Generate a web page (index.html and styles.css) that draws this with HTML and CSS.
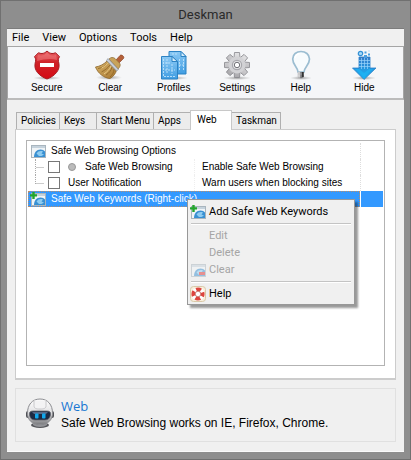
FILE: index.html
```html
<!DOCTYPE html>
<html lang="en">
<head>
<meta charset="utf-8">
<meta name="viewport" content="width=device-width, initial-scale=1">
<title>Deskman</title>
<link rel="stylesheet" href="styles.css">
</head>
<body>
<svg class="defs" aria-hidden="true">
  <defs>
    <linearGradient id="red" x1="0" y1="0" x2="0" y2="1"><stop offset="0" stop-color="#ea6266"/><stop offset=".4" stop-color="#cf2229"/><stop offset="1" stop-color="#d50812"/></linearGradient>
    <linearGradient id="blue" x1="0" y1="0" x2="0" y2="1"><stop offset="0" stop-color="#8cc9f4"/><stop offset="1" stop-color="#3f9de2"/></linearGradient>
    <linearGradient id="straw" x1="0" y1="0" x2="1" y2="1"><stop offset="0" stop-color="#d9b56c"/><stop offset="1" stop-color="#a87730"/></linearGradient>
    <linearGradient id="steel" x1="0" y1="0" x2="0" y2="1"><stop offset="0" stop-color="#e2e2e4"/><stop offset="1" stop-color="#aaa9ad"/></linearGradient>
    <linearGradient id="shell" x1="0" y1="0" x2="0" y2="1"><stop offset="0" stop-color="#fff"/><stop offset=".6" stop-color="#dedee0"/><stop offset="1" stop-color="#77787b"/></linearGradient>
    <linearGradient id="arrow" x1="0" y1="0" x2="0" y2="1"><stop offset="0" stop-color="#3378c8"/><stop offset="1" stop-color="#17b5f5"/></linearGradient>
    <radialGradient id="shade"><stop offset="0" stop-color="#777" stop-opacity=".7"/><stop offset="1" stop-color="#999" stop-opacity="0"/></radialGradient>
    <symbol id="site" viewBox="0 0 16 14">
      <rect x="1.500" y="1.500" width="14" height="12" fill="#f0f4f7" stroke="#a9b5be"/>
      <path d="M2 2h13v2H2z" fill="#c5d2dc"/>
      <path d="M4 13c0-4.500 2.500-7.500 6.500-7.500 2 0 3.500.7 4.500 2V13z" fill="#3990d2"/>
      <path d="M6.500 9.500c1.500-2.300 4-3 6.500-2l-1.500 2 2.500 1-2.500 1.500H9z" fill="#8fccf1"/>
    </symbol>
    <symbol id="site-add" viewBox="0 0 16 14">
      <use href="#site"/>
      <path d="M2.300 0h2.400v2.200H7v2.400H4.700V7H2.300V4.600H0V2.200h2.300z" fill="#23a52c"/>
    </symbol>
  </defs>
</svg>
<main class="window">
  <h1 class="title">Deskman</h1>
  <div class="client">
    <nav class="menubar" aria-label="Main menu">
      <button>File</button><button>View</button><button>Options</button><button>Tools</button><button>Help</button>
    </nav>
    <div class="toolbar" role="toolbar" aria-label="Actions">
      <button class="tool">
        <svg viewBox="0 0 30 30" aria-hidden="true"><ellipse cx="15" cy="28" rx="14" ry="2" fill="url(#shade)"/><path d="M15 1c1.500 1.500 3 2.300 5 2.500 1.500.1 2.500-.3 3.500-.8l4 4c-1.500 2-1.300 4-.7 6.300C28.500 20 23 26 15 29 7 26 1.500 20 3.200 13c.6-2.300.8-4.300-.7-6.300l4-4c1 .5 2 .9 3.500.8 2-.2 3.500-1 5-2.500z" fill="url(#red)" stroke="#a81b21"/><path d="M6 5c3 1 6 .5 9-2 3 2.500 6 3 9 2 1 2 .5 3 1 5-6-2-13-1-20 1 .5-2 0-4 1-6z" fill="#f58b8c" opacity=".45"/><rect x="8" y="13" width="14" height="4" fill="#fff"/></svg>
        <span>Secure</span>
      </button>
      <button class="tool">
        <svg viewBox="0 0 30 30" aria-hidden="true"><ellipse cx="14" cy="27.500" rx="13" ry="2.500" fill="url(#shade)"/><path d="M21 10l4-4.500c1.500-1.500 5 1.300 3.500 3L24 13z" fill="#b4603a" stroke="#8f4728" stroke-width=".7"/><path d="M14 9c2-2 4-2 6-.5l4.500 4.500c1.500 2 .5 4-1.500 6z" fill="#c8a35b" stroke="#8d6b35" stroke-width=".7"/><path d="M12.500 10.500l9 9.500c-.5 3-3 6.500-6.500 8.500-6-.5-12-5-14.500-11.500 4-.5 9-3 12-6.500z" fill="url(#straw)" stroke="#8b6428" stroke-width=".8"/><path d="M13 13C10 16 7 18 3 18.500M15 15c-2 3-5 5-8.500 7M17 17c-1 4-3 6-6 8M19 19c0 4-2 6-4 8" fill="none" stroke="#8c6428" stroke-width=".8"/><path d="M13.500 12.500c-2 2.500-4 4-7 5.500M16 16c-1 3-4 6-7 8" fill="none" stroke="#f1d38c" stroke-width=".9"/><path d="M13 8.500l10.500 11-2 1.500L11.500 10.500z" fill="#c9ced5" stroke="#7d8792" stroke-width=".6"/></svg>
        <span>Clear</span>
      </button>
      <button class="tool">
        <svg viewBox="0 0 30 30" aria-hidden="true"><ellipse cx="15" cy="28" rx="14" ry="2" fill="url(#shade)"/><g stroke="#2d83c4"><path d="M10 1.500h12l5 5V24H10z" fill="url(#blue)"/><path d="M22 1.500v5h5z" fill="#d4edfc"/><path d="M2.500 6.500h10.500l5.500 5V29h-16z" fill="url(#blue)"/><path d="M13 6.500v5h5.500z" fill="#d4edfc"/></g><path d="M13 4h6M24.500 9v12M20.500 9v12M20 15h6M4.500 9v17.500H16.500M8 9v15M6 13h6M6 20h10M13 14v10" fill="none" stroke="#bfe3fa" stroke-width=".9" stroke-dasharray="2 1"/></svg>
        <span>Profiles</span>
      </button>
      <button class="tool">
        <svg viewBox="0 0 30 30" aria-hidden="true"><ellipse cx="15" cy="28" rx="14" ry="2" fill="url(#shade)"/><g fill="url(#steel)" stroke="#85858a" stroke-width=".8"><g id="teeth"><path d="M12 8L12.500 2.500h5L18 8zM12 22l.5 5.500h5L18 22zM8 12L2.500 12.500v5L8 18zM22 12l5.500.5v5L22 18z"/></g><use href="#teeth" transform="rotate(45 15 15)"/></g><circle cx="15" cy="15" r="8.500" fill="#d2d2d5"/><circle cx="15" cy="15" r="5.200" fill="#a8a8ad"/><circle cx="15" cy="15" r="4" fill="#e5e5e7"/><circle cx="15" cy="15" r="2.700" fill="#fff" stroke="#737378"/></svg>
        <span>Settings</span>
      </button>
      <button class="tool">
        <svg viewBox="0 0 30 30" aria-hidden="true"><ellipse cx="15" cy="28" rx="11" ry="2" fill="url(#shade)"/><path d="M12 22c-.2-5-5.300-7-5.300-13C6.700 4.300 10.500 1.500 15 1.500S23.500 4.300 23.500 9c0 6-5.200 8-5.500 13z" fill="#f7fbfd" stroke="#9bbdd1" stroke-width="1.700"/><path d="M9 8c.3-2.500 2-4 4.500-4.500" fill="none" stroke="#fff" stroke-width="1.500"/><path d="M12 22h6v5c-1.500 1.500-4.500 1.500-6 0z" fill="#77777a"/><path d="M12 22h2v5.500l-2-.5zM12 24h6" fill="#ddd" stroke="#b9b9bc" stroke-width=".6"/><path d="M16 22h1.500v5H16z" fill="#333"/></svg>
        <span>Help</span>
      </button>
      <button class="tool">
        <svg viewBox="0 0 30 30" aria-hidden="true"><ellipse cx="15" cy="28" rx="12" ry="2" fill="url(#shade)"/><path d="M10 7h11v11h6L15 29.500 3.500 18H10z" fill="url(#arrow)" stroke="#2c80c8" stroke-width=".8"/><path d="M10 10.500h11M10 13.500h11M10 16.500h11M12.500 8v11M15.500 8v11M18.500 8v11" stroke="#9ad4fa" stroke-width=".7"/><path d="M6 19h4l5 4 5-4h4l-9 8z" fill="#1db7f8" opacity=".6"/><circle cx="11.500" cy="3.500" r="2.200" fill="#a8daf8" stroke="#3591d6" stroke-width="1.200"/><path d="M15.500 1.500h2v2h-2zM19 3.500h2v2h-2zM15 5h3v3h-3z" fill="#4a9fdf"/><path d="M19.500 0.500h1v1h-1z" fill="#86c4ee"/></svg>
        <span>Hide</span>
      </button>
    </div>
    <section class="content">
      <div class="tabs" role="tablist">
        <button class="tab" role="tab">Policies</button><button class="tab" role="tab">Keys</button><button class="tab" role="tab">Start Menu</button><button class="tab" role="tab">Apps</button><button class="tab tab-active" role="tab" aria-selected="true">Web</button><button class="tab" role="tab">Taskman</button>
      </div>
      <div class="panel" role="tabpanel">
        <div class="list">
          <div class="row">
            <div class="group"><svg class="site" aria-hidden="true"><use href="#site"/></svg><span>Safe Web Browsing Options</span></div><i class="rest"></i>
          </div>
          <div class="row option">
            <i class="branch"></i><input type="checkbox" id="browsing"><label for="browsing"><i class="dot"></i>Safe Web Browsing</label><span class="detail">Enable Safe Web Browsing</span><i class="rest"></i>
          </div>
          <div class="row option">
            <i class="branch branch-last"></i><input type="checkbox" id="notify"><label for="notify">User Notification</label><span class="detail">Warn users when blocking sites</span><i class="rest"></i>
          </div>
          <div class="row selected">
            <div class="group"><svg class="site" aria-hidden="true"><use href="#site-add"/></svg><span>Safe Web Keywords (Right-click)</span></div><i class="rest"></i>
          </div>
          <div class="popup" role="menu">
            <button role="menuitem"><svg class="site" aria-hidden="true"><use href="#site-add"/></svg>Add Safe Web Keywords</button>
            <hr>
            <button role="menuitem" disabled><i></i>Edit</button>
            <button role="menuitem" disabled><i></i>Delete</button>
            <button role="menuitem" disabled><svg class="site faded" viewBox="0 0 16 14" aria-hidden="true"><use href="#site"/><path d="M9 9h6v3H9z" fill="#d33"/></svg>Clear</button>
            <hr>
            <button role="menuitem"><svg class="ring" viewBox="0 0 16 16" aria-hidden="true"><rect x=".5" y=".5" width="15" height="15" rx="3" fill="#f8efdc" stroke="#d9c8a8"/><circle cx="8" cy="8" r="4.800" fill="none" stroke="#fff" stroke-width="3.600"/><circle cx="8" cy="8" r="4.800" fill="none" stroke="#dd453e" stroke-width="3.600" stroke-dasharray="5 2.540" stroke-dashoffset="2.500"/><circle cx="8" cy="8" r="2.800" fill="#fff" stroke="#b5453c" stroke-width=".7"/></svg>Help</button>
          </div>
        </div>
      </div>
      <footer class="status">
        <svg class="robot" viewBox="0 0 30 30" aria-hidden="true"><ellipse cx="15" cy="27" rx="9" ry="3" fill="#55565a"/><path d="M8 25c4 2 10 2 14 0v2c-3 2.500-11 2.500-14 0z" fill="#929397"/><rect x="1" y="13" width="4" height="7" rx="2" fill="#505156"/><rect x="25" y="13" width="4" height="7" rx="2" fill="#505156"/><path d="M15 1c8 0 12.500 6 12.500 14 0 7-4.500 11.500-12.500 11.500S2.500 22 2.500 15C2.500 7 7 1 15 1z" fill="url(#shell)" stroke="#8c8d91"/><path d="M9 2.500v5c0 3 2 3.500 6 3.500s6-.5 6-3.500v-5" fill="#f3f3f4" stroke="#bcbdc0" stroke-width=".8"/><path d="M8 13h14c3 0 4 1.500 3.500 4-.6 3.500-2.500 5-5.500 5H10c-3 0-5-1.500-5.500-5C4 14.500 5 13 8 13z" fill="#1d2a43" stroke="#65666c" stroke-width=".8"/><path d="M7 14h16l-2 2H9z" fill="#566a8a"/><rect x="10" y="15.500" width="3.500" height="5" rx=".8" fill="#12a7ec"/><rect x="17" y="15.500" width="3.500" height="5" rx=".8" fill="#12a7ec"/></svg>
        <div><h2>Web</h2><p>Safe Web Browsing works on IE, Firefox, Chrome.</p></div>
      </footer>
    </section>
  </div>
</main>
</body>
</html>
```
FILE: styles.css
```css
* { box-sizing: border-box; }
body { margin: 0; font: 10px/16px "Liberation Sans", Arial, sans-serif; color: #000; }
button { font: inherit; color: inherit; background: none; border: 0; padding: 0; margin: 0; }
h1, h2, p { margin: 0; font-weight: normal; }
i { display: block; }
.defs { position: absolute; width: 0; height: 0; }

.window { min-height: 100vh; display: flex; flex-direction: column; padding: 0 6px 7px; background: #8e8e8e; border: 1px solid #707070; }
.title { font: 13px/27px Roboto, sans-serif; text-align: center; color: #2a2a2a; }
.client { flex: 1; display: flex; flex-direction: column; background: #f0f0f0; border-top: 1px solid #7c7c7c; border-bottom: 1px solid #fafafa; }

.menubar { display: flex; gap: 13px; height: 17px; padding-left: 5px; font: 11px/17px Roboto, sans-serif; }

.toolbar { display: flex; justify-content: space-around; padding: 3px 7px 2px; background: #f5f6f8; border: 1px solid #a5a5a5; border-bottom-width: 2px; border-bottom-color: #bcbcbc; }
.tool { flex: 1; display: flex; flex-direction: column; align-items: center; }
.tool svg { width: 30px; height: 30px; }

.content { flex: 1; display: flex; flex-direction: column; padding: 10px 8px 9px; }
.tabs { display: flex; align-items: flex-end; padding-left: 1px; font-family: Roboto, sans-serif; }
.tab { height: 17px; min-width: 38px; padding: 0 3px 0 4px; margin-right: -1px; background: #ececec; border: 1px solid #b0b0b0; border-bottom: 0; text-align: left; white-space: nowrap; }
.tab-active { height: 20px; min-width: 42px; margin-bottom: -1px; padding: 0 6px 2px; background: #fff; border-color: #c8c8c8; position: relative; z-index: 1; }
.panel { flex: 1; display: flex; flex-direction: column; padding: 10px 10px 12px; background: #fff; border: 1px solid #ccc; border-bottom-width: 2px; }

.list { flex: 1; position: relative; padding: 2px 1px; border: 1px solid #b3b3b3; }
.row { display: flex; align-items: center; height: 16px; }
.group { flex: 1; display: flex; align-items: center; gap: 5px; height: 16px; padding-left: 2px; }
.site { width: 16px; height: 14px; flex: none; }
.option label { display: flex; align-items: center; flex: 0 0 126px; gap: 9px; margin-left: 8px; }
.branch { width: 9px; height: 16px; margin-left: 7px; border-left: 1px dotted #aaa; background: linear-gradient(#ccc, #ccc) 0 8px / 9px 1px no-repeat; }
.branch-last { height: 9px; align-self: flex-start; }
.option input { appearance: none; width: 12px; height: 12px; margin: 0 0 0 4px; background: #fff; border: 1px solid #777; }
.dot { width: 8px; height: 8px; border-radius: 50%; background: #bbb; border: 1px solid #999; }
.detail { flex: 1; padding-left: 7px; border-left: 1px dotted #eee; }
.rest { width: 23px; height: 16px; border-left: 1px dotted #ddd; }
.selected { color: #fff; background: #3399ff; }
.selected .group { outline: 1px dotted #b98d6c; outline-offset: -1px; }
.selected .rest { border-left: 1px solid #fff; }

.popup { position: absolute; left: 160px; top: 58px; width: 168px; padding: 3px 2px 2px; background: #f0f0f0; border: 1px solid #989898; box-shadow: 3px 3px 2px #0006; font: 11px/17px Roboto, sans-serif; }
.popup button { display: flex; align-items: center; gap: 3px; width: 100%; height: 17px; }
.popup button:disabled { color: #a5a5a5; }
.popup i { width: 16px; }
.popup hr { height: 2px; margin: 3px 1px 2px; border: 0; border-top: 1px solid #c4c4c4; background: #fff; }
.faded { opacity: .5; }
.ring { width: 16px; height: 16px; }

.status { display: flex; gap: 6px; margin-top: 8px; padding: 9px 9px 10px; border: 1px solid #e0e0e0; }
.robot { width: 30px; height: 30px; }
.status h2 { font: 13px/17px "Open Sans", sans-serif; color: #1877d2; }
.status p { font-size: 12px; }
```
